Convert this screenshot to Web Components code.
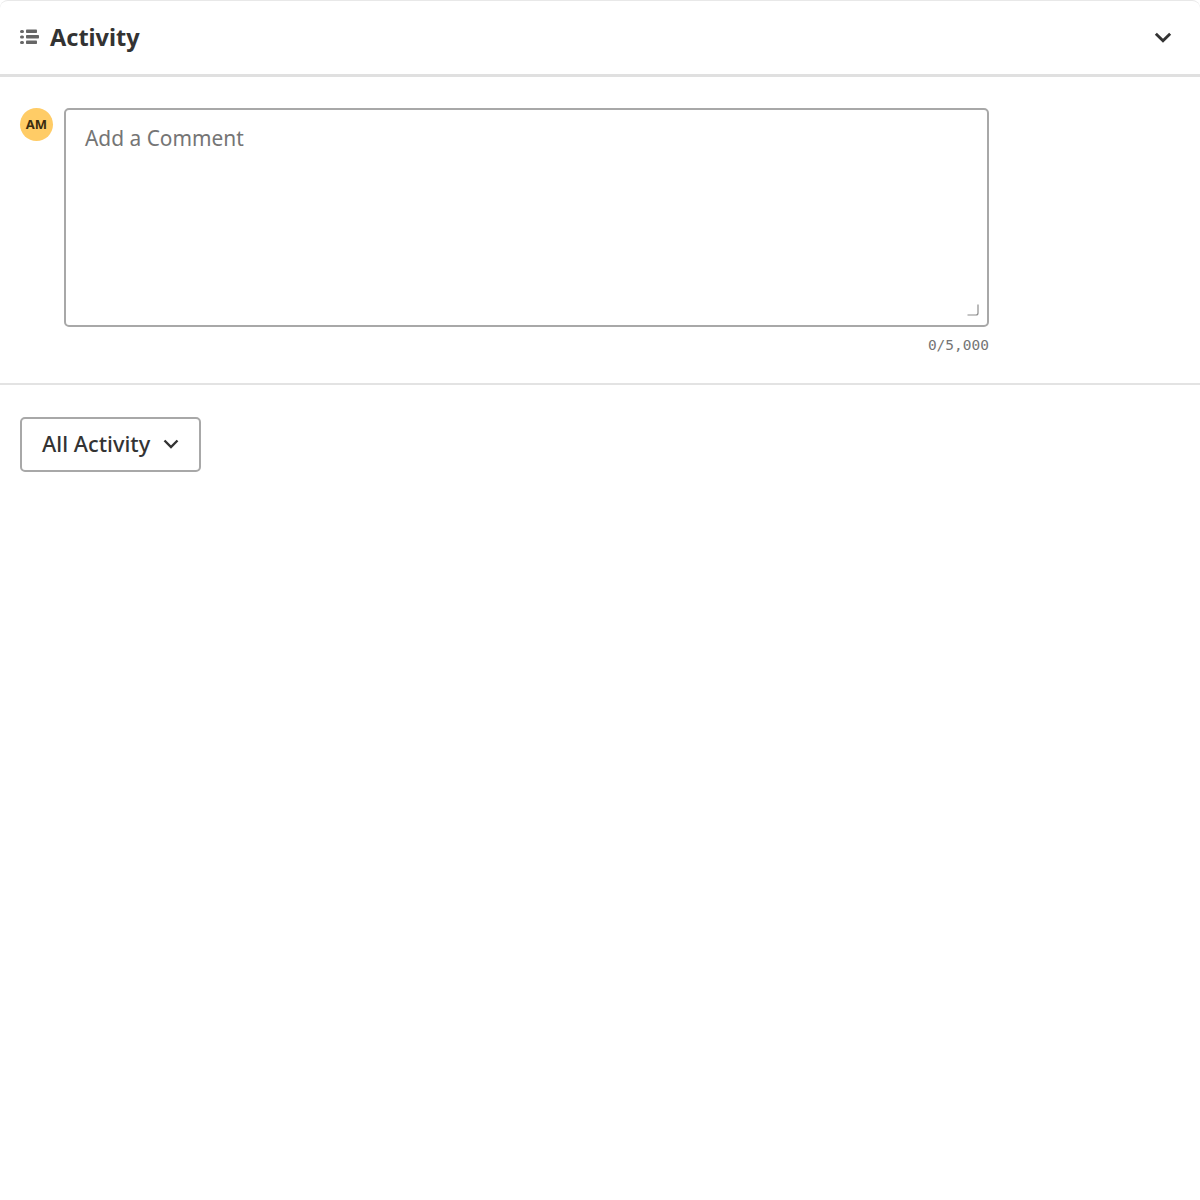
<!DOCTYPE html>
<html>
<head>
<meta charset="utf-8">
<title>Activity</title>
<style>
  html, body { margin: 0; background: #fff; }
  body { font-family: "Noto Sans", sans-serif; color: #333; }
</style>
</head>
<body>
<activity-panel>
  <span slot="title">Activity</span>
  <comment-box initials="AM" placeholder="Add a Comment" count="0/5,000"></comment-box>
  <filter-button>All Activity</filter-button>
</activity-panel>

<script>
const chevron = (w, h, sw) => `<svg width="${w}" height="${h}" viewBox="0 0 16 10" fill="none" stroke="currentColor" stroke-width="${sw}" aria-hidden="true"><path d="M1.5 1.5 8 8l6.5-6.5"/></svg>`

customElements.define('activity-panel', class extends HTMLElement {
  constructor () {
    super()
    this.attachShadow({ mode: 'open' })
    this.shadowRoot.innerHTML = `
      <style>
        :host {
          display: block;
          box-sizing: border-box;
          height: 1200px;
          border-top: 1px solid #e8e8e8;
          border-radius: 8px 8px 0 0;
        }
        header {
          box-sizing: border-box;
          height: 76px;
          display: flex;
          align-items: center;
          padding: 0 28px 0 20px;
          border-bottom: 3px solid #e0e0e0;
          gap: 11px;
        }
        h2 {
          flex: 1;
          margin: -1px 0 0;
          font-size: 23.5px;
          line-height: 32px;
          font-weight: 700;
          color: #333;
        }
        svg { display: block; }
        .toggle { color: #333; }
        .list { color: #666; margin-top: -1px; }
      </style>
      <header>
        <svg class="list" width="19" height="16" viewBox="0 0 19 16" fill="currentColor" aria-hidden="true">
          <rect x="0" y="1" width="4" height="3" rx="1.5"/>
          <rect x="0" y="6.5" width="4" height="3" rx="1.5"/>
          <rect x="0" y="12" width="4" height="3" rx="1.5"/>
          <rect x="6" y="0.5" width="11" height="3.5" rx=".8"/>
          <rect x="6" y="6" width="13" height="3.5" rx=".8"/>
          <rect x="6" y="11.5" width="11" height="3.5" rx=".8"/>
        </svg>
        <h2><slot name="title"></slot></h2>
        <span class="toggle">${chevron(18, 11, 2.6)}</span>
      </header>
      <slot></slot>
    `
  }
})

customElements.define('comment-box', class extends HTMLElement {
  constructor () {
    super()
    this.attachShadow({ mode: 'open' })
  }

  connectedCallback () {
    this.shadowRoot.innerHTML = `
      <style>
        :host {
          display: grid;
          grid-template-columns: 33px 925px;
          align-content: start;
          align-items: start;
          column-gap: 11px;
          box-sizing: border-box;
          height: 308px;
          padding: 31px 20px 0;
          border-bottom: 2px solid #e3e3e3;
        }
        .avatar {
          box-sizing: border-box;
          width: 33px;
          height: 33px;
          padding-bottom: 2px;
          border-radius: 50%;
          background: #ffcc66;
          display: flex;
          align-items: center;
          justify-content: center;
          font-size: 13px;
          font-weight: 700;
          color: #3a2c10;
        }
        .input {
          position: relative;
          box-sizing: border-box;
          height: 219px;
          padding: 14px 19px;
          border: 2px solid #a8a8a8;
          border-radius: 5px;
          font-size: 20.9px;
          line-height: 28px;
          color: #757575;
        }
        .grip {
          position: absolute;
          right: 8px;
          bottom: 9px;
          color: #8c8c8c;
        }
        .count {
          grid-column: 2;
          margin-top: 8px;
          text-align: right;
          font-family: "DejaVu Sans Mono", monospace;
          font-size: 14.5px;
          line-height: 20px;
          color: #757575;
        }
      </style>
      <div class="avatar">${this.getAttribute('initials')}</div>
      <div class="input">
        ${this.getAttribute('placeholder')}
        <svg class="grip" width="12" height="12" viewBox="0 0 12 12" fill="none" stroke="currentColor" stroke-width="1.2" aria-hidden="true"><path d="M.5 11H9a2 2 0 0 0 2-2V.5"/></svg>
      </div>
      <div class="count">${this.getAttribute('count')}</div>
    `
  }
})

customElements.define('filter-button', class extends HTMLElement {
  constructor () {
    super()
    this.attachShadow({ mode: 'open' })
    this.shadowRoot.innerHTML = `
      <style>
        :host {
          display: inline-flex;
          align-items: center;
          box-sizing: border-box;
          height: 55px;
          margin: 32px 0 0 20px;
          padding: 0 20px 2px 20px;
          gap: 13px;
          border: 2px solid #a8a8a8;
          border-radius: 5px;
          font-size: 21.8px;
          font-weight: 500;
          color: #333;
        }
        svg { display: block; margin-top: 0; }
      </style>
      <slot></slot>
      ${chevron(16, 10, 2.4)}
    `
  }
})
</script>
</body>
</html>
